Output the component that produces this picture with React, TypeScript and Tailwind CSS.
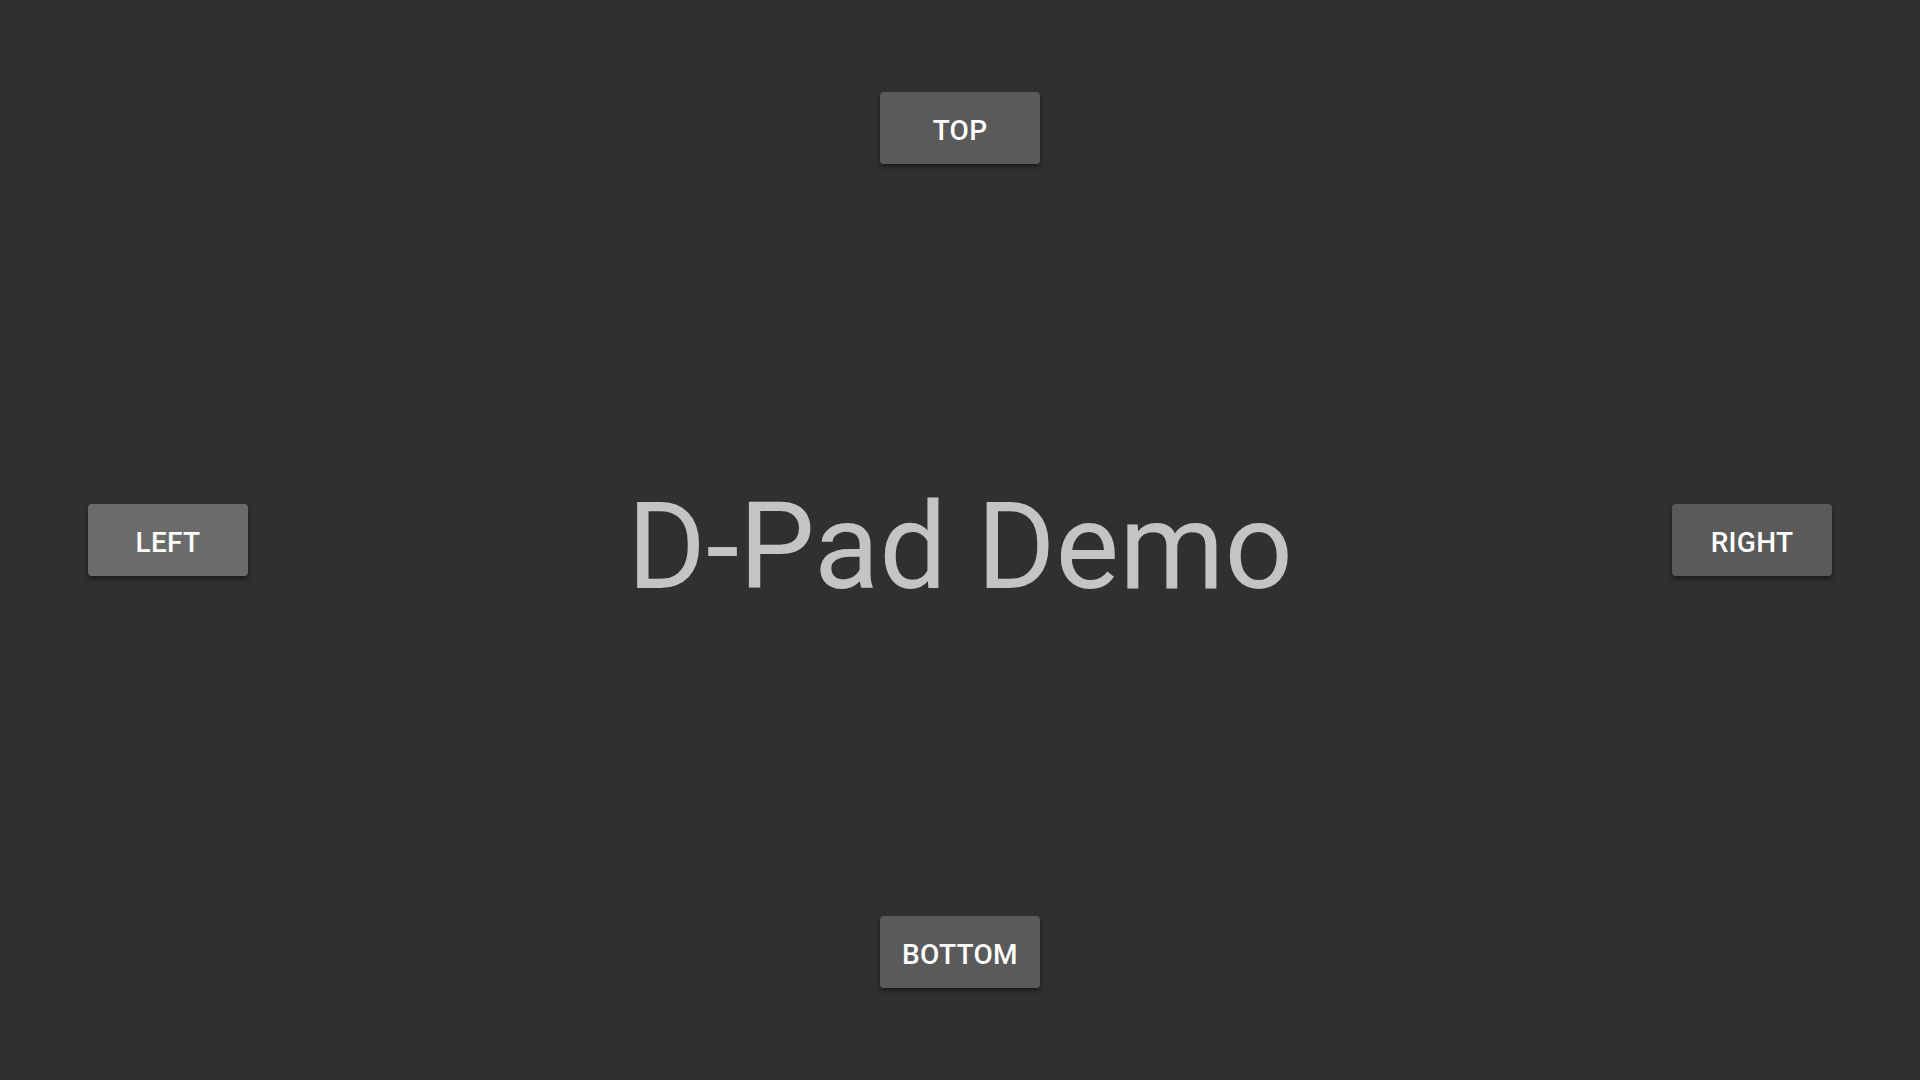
import { useState } from "react";

type Dir = "TOP" | "LEFT" | "RIGHT" | "BOTTOM";

const PadButton = ({
  label,
  focused,
  onFocus,
}: {
  label: Dir;
  focused: boolean;
  onFocus: (d: Dir) => void;
}) => (
  <button
    onMouseEnter={() => onFocus(label)}
    className={`w-[160px] h-[72px] pt-[5px] rounded-[4px] text-white text-[28px] font-medium tracking-[0.3px] shadow-[0_3px_5px_rgba(0,0,0,0.45)] ${
      focused ? "bg-[#6b6b6b]" : "bg-[#5a5a5a]"
    }`}
  >
    {label}
  </button>
);

const App = () => {
  const [focused, setFocused] = useState<Dir>("LEFT");

  return (
    <div
      className="w-screen h-screen bg-[#303030] flex flex-col items-center justify-between py-[92px]"
      style={{ fontFamily: "Roboto, 'Noto Sans', sans-serif" }}
    >
      <PadButton label="TOP" focused={focused === "TOP"} onFocus={setFocused} />

      <div className="w-full flex items-center justify-between px-[88px]">
        <PadButton label="LEFT" focused={focused === "LEFT"} onFocus={setFocused} />
        {/* title sits a bit below the button row's centre */}
        <h1 className="pt-[14px] text-[120px] leading-none text-[#c4c4c4] font-normal">
          D-Pad Demo
        </h1>
        <PadButton label="RIGHT" focused={focused === "RIGHT"} onFocus={setFocused} />
      </div>

      <PadButton label="BOTTOM" focused={focused === "BOTTOM"} onFocus={setFocused} />
    </div>
  );
};

export default App;
